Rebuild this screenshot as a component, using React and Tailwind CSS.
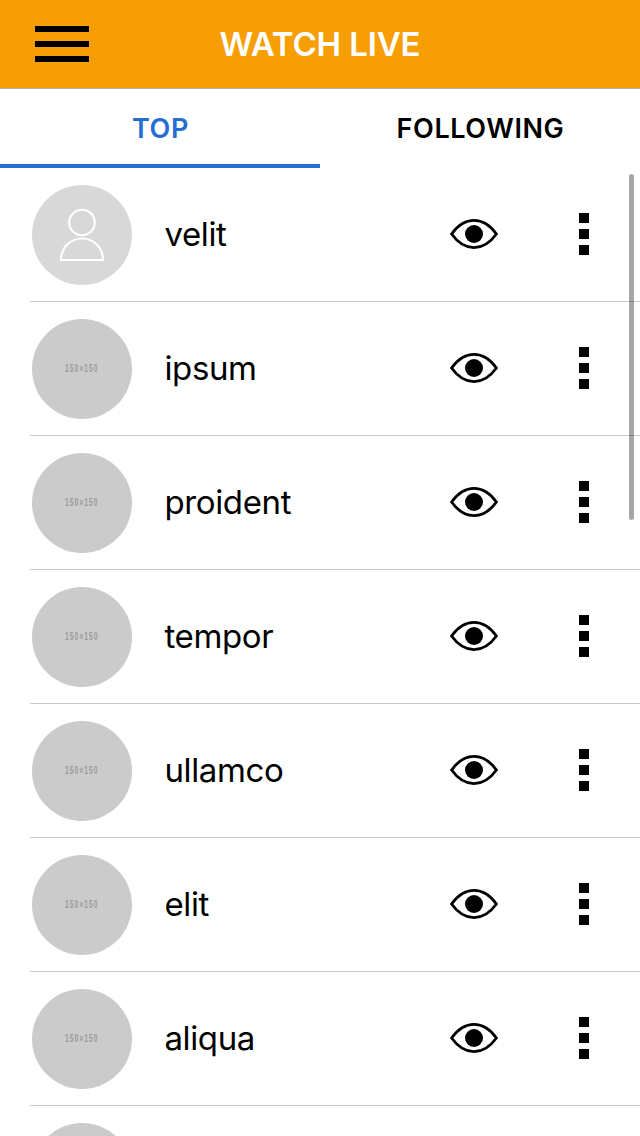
const people = ['velit', 'ipsum', 'proident', 'tempor', 'ullamco', 'elit', 'aliqua', ''];

function PersonAvatar() {
  return (
    <div className="size-[100px] shrink-0 rounded-full bg-[#d8d8d8]">
      <svg viewBox="0 0 100 100" className="size-full" fill="none" stroke="white" strokeWidth="2.1">
        <circle cx="50" cy="37.5" r="12.8" />
        <path d="M29 75c0-12 9-21.500 21-21.500S71 63 71 75Z" />
      </svg>
    </div>
  );
}

function PlaceholderAvatar({ label }) {
  return (
    <div className="flex size-[100px] shrink-0 items-center justify-center rounded-full bg-[#cbcbcb] pb-px">
      {label && (
        <span className="scale-x-[0.58] text-[11.5px] leading-none font-bold tracking-[1.8px] text-[#9a9a9a] font-['Liberation_Sans',sans-serif]">
          {label}
        </span>
      )}
    </div>
  );
}

function EyeIcon() {
  return (
    <svg viewBox="0 0 48 30" className="h-[30px] w-12 shrink-0">
      <path
        d="M1.6 15C7.5 6.8 14.5 1.4 24 1.4S40.500 6.800 46.400 15C40.500 23.200 33.500 28.600 24 28.600S7.500 23.200 1.600 15Z"
        fill="none"
        stroke="black"
        strokeWidth="2.8"
      />
      <circle cx="24" cy="15" r="9" />
    </svg>
  );
}

function Row({ name, first }) {
  return (
    <li className="ml-[30px] flex h-[134px] shrink-0 items-start border-b border-[#c8c7cc] pt-[17px] pl-0.5">
      {first ? <PersonAvatar /> : <PlaceholderAvatar label={name && '150×150'} />}
      <span className="ml-8 w-[286px] pt-[29px] pl-[0.4px] text-[33px] leading-[40px] tracking-[-0.35px]">{name}</span>
      <div className="flex h-[98px] items-center">
        <EyeIcon />
        <div className="ml-[81px] flex flex-col gap-1.5">
          <i className="size-2.5 bg-black" />
          <i className="size-2.5 bg-black" />
          <i className="size-2.5 bg-black" />
        </div>
      </div>
    </li>
  );
}

export default function App() {
  return (
    <div className="relative flex h-[1136px] w-[640px] flex-col overflow-hidden bg-white text-black font-['Inter',sans-serif]">
      <header className="grid h-[89px] shrink-0 grid-cols-[120px_1fr_120px] items-center border-b border-[#b2b2b2] bg-[#f79e05]">
        <button aria-label="Menu" className="ml-[35px] flex w-[54px] flex-col gap-[9px]">
          <i className="h-1.5 w-full bg-black" />
          <i className="h-1.5 w-full bg-black" />
          <i className="h-1.5 w-full bg-black" />
        </button>
        <h1 className="text-center text-[33px] leading-[40px] font-semibold tracking-[-0.15px] text-white">WATCH LIVE</h1>
      </header>
      <nav className="grid h-[79px] shrink-0 grid-cols-2 text-center text-[27px] leading-[70px] font-[570] tracking-[0.6px]">
        <a className="border-b-4 border-[#236fd1] pt-[5px] pl-px text-[#236fd1]">TOP</a>
        <a className="pt-[5px] pl-px">FOLLOWING</a>
      </nav>
      <ul className="flex flex-col">
        {people.map((name, i) => (
          <Row key={i} name={name} first={i === 0} />
        ))}
      </ul>
      <div className="absolute top-[174px] right-[6px] h-[346px] w-[5px] rounded-full bg-black/35" />
    </div>
  );
}
